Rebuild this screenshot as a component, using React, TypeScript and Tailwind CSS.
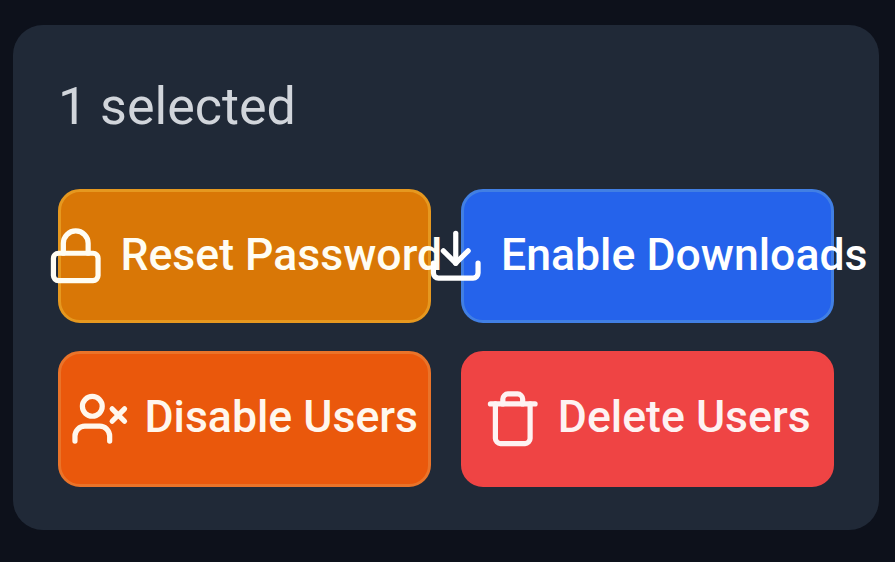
import type { ReactNode } from "react";

function Icon({ children }: { children: ReactNode }) {
  return (
    <svg
      className="size-[59.5px] shrink-0"
      viewBox="0 0 24 24"
      fill="none"
      stroke="currentColor"
      strokeWidth="2.1"
      strokeLinecap="round"
      strokeLinejoin="round"
    >
      {children}
    </svg>
  );
}

const button =
  "flex items-center justify-center gap-[15px] whitespace-nowrap rounded-[22px] border-[3px] pr-px pb-px font-medium text-[44.6px] leading-[60px]";

export default function App() {
  return (
    <div className="h-[562px] w-[895px] overflow-hidden bg-[#0d111b] pl-[13px] pt-[25px] font-['Roboto',sans-serif]">
      <section className="h-[505px] w-[866px] rounded-[30px] bg-[#202937] px-[45px] pt-[44px]">
        <p className="h-[120px] text-[52px] leading-[75px] text-[#d1d5db]">1 selected</p>
        <div className="grid grid-cols-[373px_373px] grid-rows-[134px_136px] gap-x-[30px] gap-y-[28px]">
          <button className={`${button} border-[#e6981f] bg-[#d97706] text-[#fffdf3]`}>
            <Icon>
              <rect x="3" y="11" width="18" height="11" rx="2" />
              <path d="M7 11V7a5 5 0 0 1 10 0v4" />
            </Icon>
            <span className="pb-[2px]">Reset Password</span>
          </button>
          <button className={`${button} border-[#417fe4] bg-[#2563eb] text-white`}>
            <Icon>
              <path d="M21 15v4a2 2 0 0 1-2 2H5a2 2 0 0 1-2-2v-4" />
              <path d="m7 10 5 5 5-5" />
              <path d="M12 15V3" />
            </Icon>
            <span className="pb-[2px]">Enable Downloads</span>
          </button>
          <button className={`${button} border-[#ea7329] bg-[#ea580c] text-[#fff7ed]`}>
            <Icon>
              <path d="M16 21v-2a4 4 0 0 0-4-4H6a4 4 0 0 0-4 4v2" />
              <circle cx="9" cy="7" r="4" />
              <path d="m17 8 5 5" />
              <path d="m22 8-5 5" />
            </Icon>
            <span className="pb-[4px]">Disable Users</span>
          </button>
          <button className={`${button} border-[#ef4444] bg-[#ef4444] text-[#fef2f2]`}>
            <Icon>
              <path d="M3 6h18" />
              <path d="M19 6v14c0 1-1 2-2 2H7c-1 0-2-1-2-2V6" />
              <path d="M8 6V4c0-1 1-2 2-2h4c1 0 2 1 2 2v2" />
            </Icon>
            <span className="pb-[4px]">Delete Users</span>
          </button>
        </div>
      </section>
    </div>
  );
}
